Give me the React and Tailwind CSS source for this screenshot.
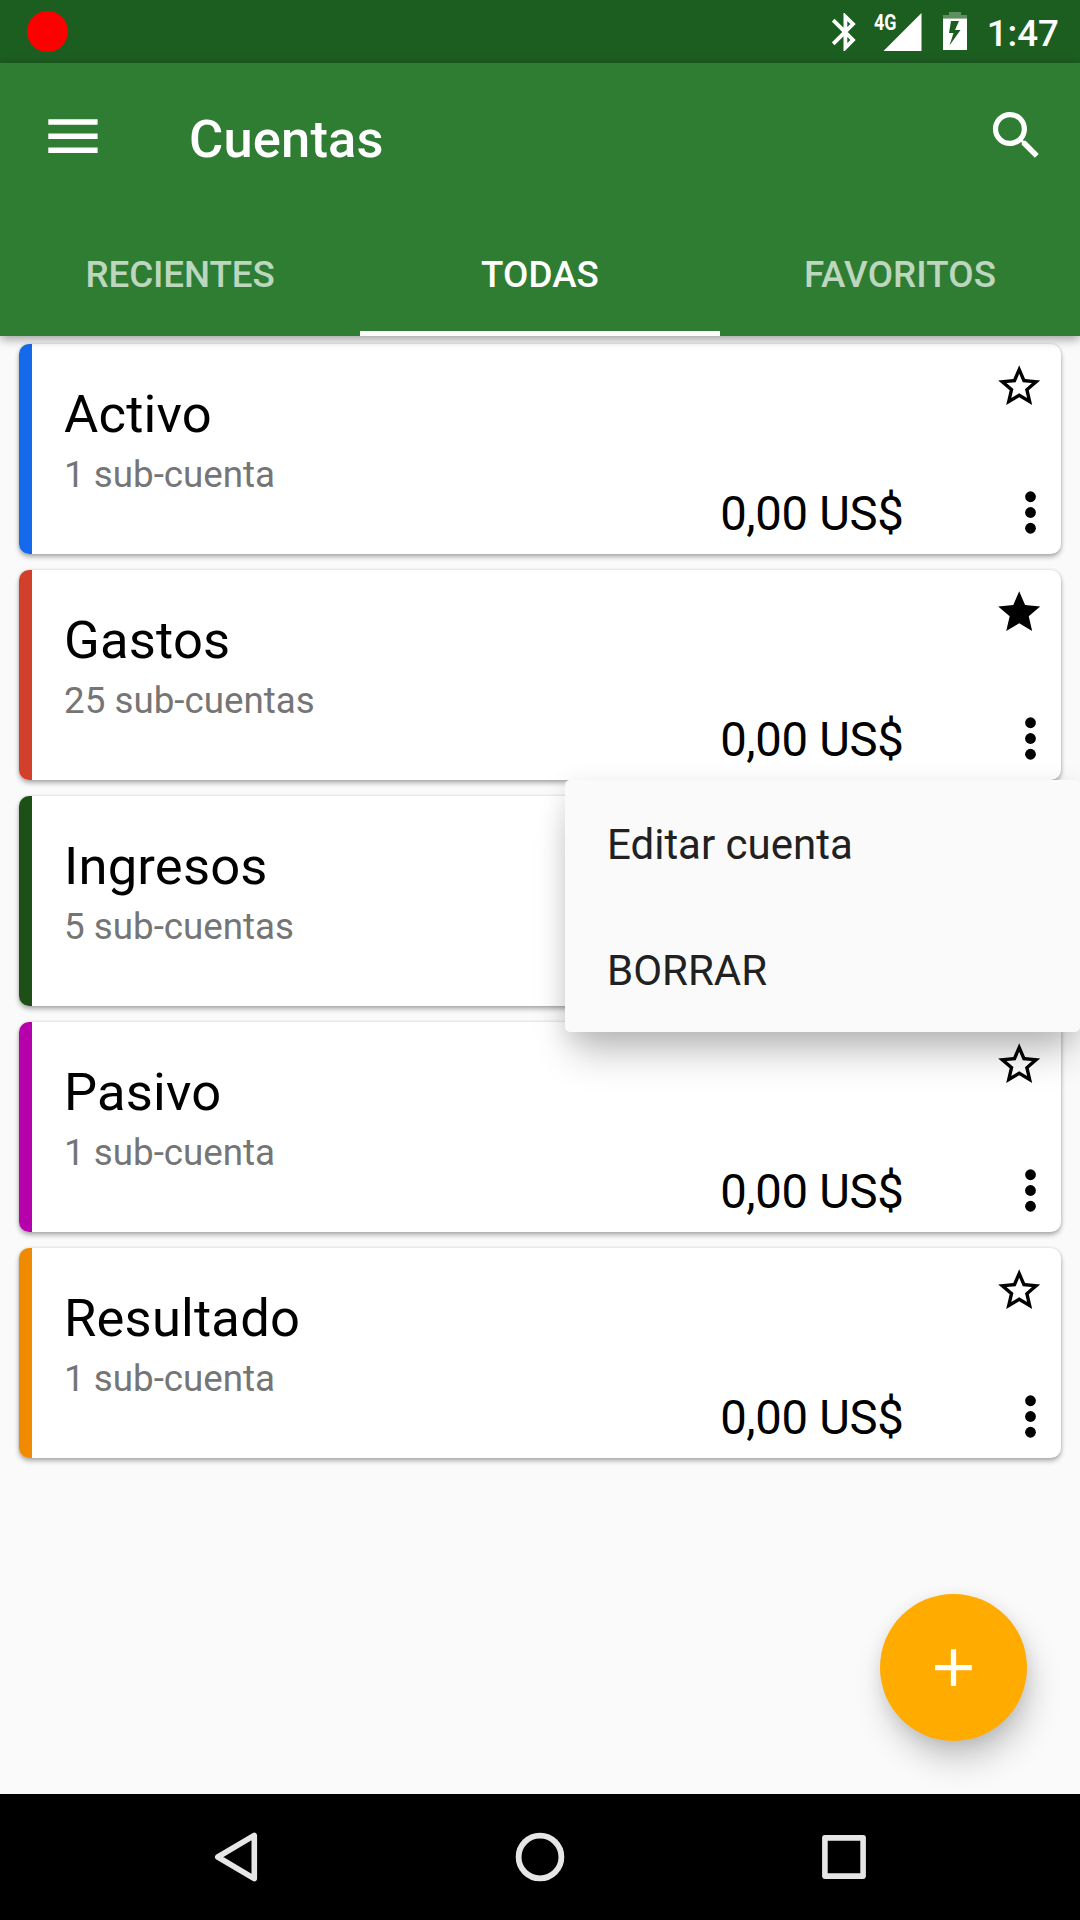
import React from "react";

const accounts = [
  { name: "Activo", sub: "1 sub-cuenta", color: "bg-[#1569eb]", favorite: false, amount: "0,00 US$" },
  { name: "Gastos", sub: "25 sub-cuentas", color: "bg-[#d23f2b]", favorite: true, amount: "0,00 US$" },
  { name: "Ingresos", sub: "5 sub-cuentas", color: "bg-[#1d5017]", favorite: false, amount: "" },
  { name: "Pasivo", sub: "1 sub-cuenta", color: "bg-[#b500ab]", favorite: false, amount: "0,00 US$" },
  { name: "Resultado", sub: "1 sub-cuenta", color: "bg-[#f08a00]", favorite: false, amount: "0,00 US$" },
];

function Star({ filled }) {
  return (
    <svg viewBox="0 0 24 24" className="h-[50.4px] w-[50.4px]" fill="#000">
      {filled ? (
        <path d="M12 17.27L18.18 21l-1.64-7.03L22 9.24l-7.19-.61L12 2 9.19 8.63 2 9.24l5.46 4.73L5.82 21z" />
      ) : (
        <path d="M22 9.24l-7.19-.62L12 2 9.19 8.63 2 9.24l5.46 4.73L5.82 21 12 17.27 18.18 21l-1.63-7.03L22 9.24zM12 15.4l-3.76 2.27 1-4.28-3.32-2.88 4.38-.38L12 6.1l1.71 4.04 4.38.38-3.32 2.88 1 4.28L12 15.4z" />
      )}
    </svg>
  );
}

function MoreIcon() {
  return (
    <svg viewBox="0 0 24 24" className="mt-[0.5px] mr-[-0.5px] h-[63px] w-[63px]" fill="#000">
      <circle cx="12" cy="6" r="2.05" />
      <circle cx="12" cy="12" r="2.05" />
      <circle cx="12" cy="18" r="2.05" />
    </svg>
  );
}

function StatusBar() {
  return (
    <header className="flex h-[63px] items-center bg-[#1b5e20] pl-[27px] text-white">
      <div className="h-[41px] w-[41px] rounded-full bg-[#ff0000]" />
      <div className="ml-auto flex h-full items-start pr-[21px]">
        <svg viewBox="0 0 24 38" className="mt-[13px] h-[38px] w-[24px]" fill="none" stroke="#fff" strokeWidth="3.8">
          <path d="M1.2 7.2L21 27l-7.6 7.7V3.6L21 11 1.2 30.8" />
        </svg>
        <svg viewBox="-6 -12 54 63" className="ml-[12px] h-[63px] w-[54px]" fill="#fff">
          <path d="M47.5 1v38H9.5z" />
          <text x="0" y="17.8" fontFamily="Roboto" fontWeight="700" fontSize="22" textLength="22.5" lengthAdjust="spacingAndGlyphs">4G</text>
        </svg>
        <svg viewBox="0 0 24 38" className="mt-[12px] ml-[21px] h-[38px] w-[24px]" fill="#fff">
          <path fillOpacity=".3" d="M6 0h12v3h6v3.6H0V3h6z" />
          <path fillRule="evenodd" d="M0 6.6h24V38H0zM8 9l-2 12h4.5L6.5 33.5 17.5 18H12l4-9z" />
        </svg>
        <span className="mt-[10px] ml-[20px] text-[36.75px] leading-[48px] font-medium">1:47</span>
      </div>
    </header>
  );
}

function AppBar() {
  return (
    <div className="relative z-10 bg-[#2e7d32] text-white shadow-[0_3px_10px_rgba(0,0,0,0.38)]">
      <div className="flex h-[147px] items-center">
        <svg viewBox="0 0 50 34" className="mb-[2px] ml-[48px] h-[34px] w-[50px]" fill="#fff">
          <path d="M.3 .3h49.3v5.5H.3zM.3 14.4h49.3v5.5H.3zM.3 28.4h49.3v5.5H.3z" />
        </svg>
        <h1 className="ml-[91px] pt-[5px] text-[52.5px] leading-[60px] font-medium tracking-[0.15px]">Cuentas</h1>
        <svg viewBox="0 0 24 24" className="mr-[32px] mb-[3px] ml-auto h-[63px] w-[63px]" fill="#fff">
          <path d="M15.5 14h-.79l-.28-.27C15.41 12.59 16 11.11 16 9.5 16 5.91 13.09 3 9.5 3S3 5.91 3 9.5 5.91 16 9.5 16c1.61 0 3.09-.59 4.23-1.57l.27.28v.79l5 4.99L20.49 19l-4.99-5zm-6 0C7.01 14 5 11.99 5 9.5S7.01 5 9.5 5 14 7.01 14 9.5 11.99 14 9.5 14z" />
        </svg>
      </div>
      <nav className="grid h-[126px] grid-cols-3 text-center text-[36.75px] leading-[44px] font-medium">
        <div className="pt-[43px] tracking-[-0.1px] text-white/70">RECIENTES</div>
        <div className="border-b-[5px] border-white pt-[43px] tracking-[0.1px]">TODAS</div>
        <div className="pt-[43px] tracking-[0.1px] text-white/70">FAVORITOS</div>
      </nav>
    </div>
  );
}

function AccountCard({ account }) {
  return (
    <article className="flex h-[210px] overflow-hidden rounded-[10px] bg-white shadow-[0_3px_5px_rgba(0,0,0,0.3),0_0_3px_rgba(0,0,0,0.14)]">
      <div className={`w-[13px] ${account.color}`} />
      <div className="pt-[40px] pl-[32px]">
        <h2 className="text-[52.5px] leading-[60px] tracking-[0.2px] text-black">{account.name}</h2>
        <p className="mt-[9px] text-[36.75px] leading-[44px] text-[#757575]">{account.sub}</p>
      </div>
      <div className="ml-auto flex flex-col items-end justify-between pt-[17px]">
        <div className="pr-[17px]">
          <Star filled={account.favorite} />
        </div>
        <div className="flex h-[74px]">
          <span className="mt-[6px] mr-[95px] text-[47.25px] leading-[56px] tracking-[-0.32px] text-black">{account.amount}</span>
          <MoreIcon />
        </div>
      </div>
    </article>
  );
}

export default function App() {
  return (
    <div className="relative flex h-[1920px] w-[1080px] flex-col overflow-hidden bg-[#fafafa] font-['Roboto',sans-serif]">
      <StatusBar />
      <AppBar />
      <main className="flex flex-1 flex-col gap-[16px] px-[19px] pt-[8px]">
        {accounts.map((a) => (
          <AccountCard key={a.name} account={a} />
        ))}
      </main>

      <div className="absolute top-[780px] left-[565px] z-20 w-[515px] rounded-[5px] bg-[#fafafa] text-[42px] leading-[50px] text-[#212121] shadow-[0_28px_36px_-8px_rgba(0,0,0,0.24),0_4px_24px_rgba(0,0,0,0.1)]">
        <div className="h-[126px] pt-[40px] pl-[42px]">Editar cuenta</div>
        <div className="h-[126px] pt-[40px] pl-[42px]">BORRAR</div>
      </div>

      <button className="absolute top-[1594px] left-[880px] flex h-[147px] w-[147px] items-center justify-center rounded-full bg-[#ffab00] shadow-[5px_20px_34px_-4px_rgba(0,0,0,0.24),0_3px_16px_rgba(0,0,0,0.08)]">
        <svg viewBox="0 0 24 24" className="h-[63px] w-[63px]" fill="#fff">
          <path d="M19 13h-6v6h-2v-6H5v-2h6V5h2v6h6v2z" />
        </svg>
      </button>

      <footer className="relative z-10 flex h-[126px] items-center bg-black">
        <svg viewBox="0 0 50 52" className="ml-[211px] h-[52px] w-[50px]" fill="none" stroke="#e6e6e6" strokeWidth="5.6" strokeLinejoin="round">
          <path d="M43.3 4.4v43.2L6.8 26z" />
        </svg>
        <svg viewBox="0 0 50 50" className="ml-[254px] h-[50px] w-[50px]" fill="none" stroke="#e6e6e6" strokeWidth="5.8">
          <circle cx="25" cy="25" r="21.4" />
        </svg>
        <svg viewBox="0 0 46 46" className="ml-[256px] h-[46px] w-[46px]" fill="none" stroke="#e6e6e6" strokeWidth="5.6" strokeLinejoin="round">
          <path d="M3.9 3.9h38.2v38.2H3.9z" />
        </svg>
      </footer>
    </div>
  );
}
